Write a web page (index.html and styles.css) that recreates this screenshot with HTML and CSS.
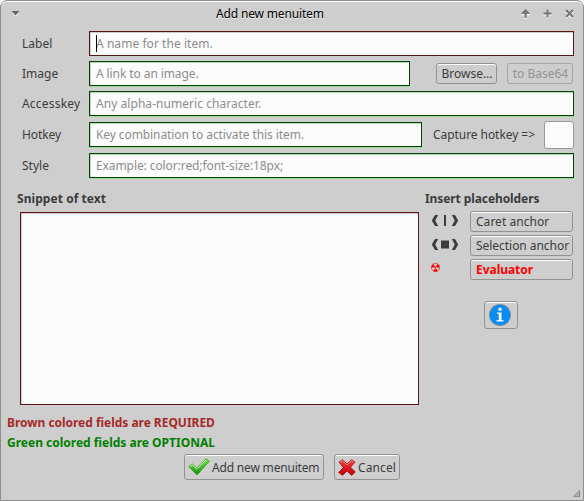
FILE: index.html
```html
<!DOCTYPE html>
<html lang="en">
<head>
<meta charset="utf-8">
<title>Add new menuitem</title>
<link rel="stylesheet" href="styles.css">
</head>
<body>
<main class="window">
  <header class="titlebar">
    <svg class="menu-arrow" width="9" height="6" viewBox="0 0 9 6"><path d="M1 1.5h7L4.500 5.800z" fill="#fff"/><path d="M.5 0h8L4.500 4.500z" fill="#666"/></svg>
    <h1 class="title">Add new menuitem</h1>
    <div class="controls">
      <svg width="9" height="10" viewBox="0 0 9 10"><path d="M4.500 10V3M1 6l3.500-3.500L8 6" stroke="#fff" stroke-width="2" fill="none"/><path d="M3.500 9V5H.5V4L4.500 0l4 4v1h-3v4z" fill="#777"/></svg>
      <svg width="9" height="10" viewBox="0 0 9 10"><path d="M.5 5.500h8M4.500 1.500v8" stroke="#fff" stroke-width="2"/><path d="M.5 4.500h8M4.500.5v8" stroke="#777" stroke-width="2"/></svg>
      <svg width="9" height="10" viewBox="0 0 9 10"><path d="M1 2l7 7M8 2L1 9" stroke="#fff" stroke-width="2"/><path d="M1 1l7 7M8 1L1 8" stroke="#777" stroke-width="2"/></svg>
    </div>
  </header>

  <section class="form">
    <div class="row"><span class="label">Label</span><div class="field required"><i class="caret"></i><span class="hint loose">A name for the item.</span></div></div>
    <div class="row"><span class="label">Image</span><div class="field image"><span class="hint tight">A link to an image.</span></div><button class="btn browse">Browse...</button><button class="btn base64" disabled>to Base64</button></div>
    <div class="row"><span class="label wide">Accesskey</span><div class="field"><span class="hint loose">Any alpha-numeric character.</span></div></div>
    <div class="row hotkey-row"><span class="label tight">Hotkey</span><div class="field hotkey"><span class="hint tight">Key combination to activate this item.</span></div><span class="capture">Capture hotkey =&gt;</span><div class="keybox"></div></div>
    <div class="row"><span class="label">Style</span><div class="field"><span class="hint tight">Example: color:red;font-size:18px;</span></div></div>
  </section>

  <section class="body">
    <div class="snippet">
      <h2>Snippet of text</h2>
      <div class="field required area"></div>
    </div>
    <div class="placeholders">
      <h2 class="tight">Insert placeholders</h2>
      <div class="ph-row"><svg width="28" height="12" viewBox="0 0 28 12"><path d="M4 0h3.200L4.200 5.500 7.200 11H4L.8 5.500zM24 0h-3.200l3 5.500-3 5.500H24l3.200-5.500zM13 0h2v11h-2z" fill="#3c3c3c"/></svg><button class="btn loose">Caret anchor</button></div>
      <div class="ph-row"><svg width="28" height="12" viewBox="0 0 28 12"><path d="M4 0h3.200L4.200 5.500 7.200 11H4L.8 5.500zM24 0h-3.200l3 5.500-3 5.500H24l3.200-5.500zM10 1.500h8v8h-8z" fill="#3c3c3c"/></svg><button class="btn">Selection anchor</button></div>
      <div class="ph-row evaluator"><svg class="rad" width="9" height="9" viewBox="0 0 18 18"><circle cx="9" cy="9" r="8.300" fill="none" stroke="#f00" stroke-width="1.300"/><path d="M9 9L1 9A8 8 0 0 1 5 2zM9 9L13 2A8 8 0 0 1 17 9zM9 9L13 16A8 8 0 0 1 5 16z" fill="#f00"/><circle cx="9" cy="9" r="2" fill="#f00" stroke="#cecece"/></svg><button class="btn">Evaluator</button></div>
      <button class="btn info"><svg width="24" height="24" viewBox="0 0 24 24"><circle cx="11" cy="12" r="11" fill="#7d8a96"/><circle cx="11" cy="12" r="10.200" fill="#0a8df2"/><path d="M8 9.500h4.500v7.800H14.500V18.500h-7v-1.200h2.200v-6.500H8z" fill="#fff"/><circle cx="11" cy="6.300" r="1.700" fill="#fff"/></svg></button>
    </div>
  </section>

  <p class="note brown">Brown colored fields are REQUIRED</p>
  <p class="note green">Green colored fields are OPTIONAL</p>

  <footer class="actions">
    <button class="btn add"><svg width="22" height="18" viewBox="0 0 22 18"><defs><linearGradient id="g" x1="0" y1="0" x2="0" y2="1"><stop offset="0" stop-color="#7be04e"/><stop offset="1" stop-color="#128f0c"/></linearGradient></defs><path d="M.7 8.500L4.500 6l4.200 4L18 .8l3.300 2.500L9 17z" fill="url(#g)" stroke="#249a18" stroke-width=".7"/><path d="M2 8.500l2.500-1.500L8.700 11 18 2" fill="none" stroke="#d4f8bd" stroke-width="1"/></svg><span>Add new menuitem</span></button>
    <button class="btn cancel"><svg width="18" height="17" viewBox="0 0 18 17"><defs><linearGradient id="r" x1="0" y1="0" x2="0" y2="1"><stop offset="0" stop-color="#ee4848"/><stop offset=".5" stop-color="#e31b20"/><stop offset="1" stop-color="#b40209"/></linearGradient></defs><path d="M1 3l3.500-2.300L9 5l4.500-4.300L17 3l-4.500 5.200L17.300 13l-3.800 3.300L9 12l-4.500 4.300L.7 13.500l4.600-5z" fill="url(#r)" stroke="#a5080c" stroke-width=".8"/><path d="M2 3.200L4.500 1.700 9 6l4.500-4.300L15.500 3" fill="none" stroke="#f7a0a0" stroke-width=".8"/></svg><span>Cancel</span></button>
  </footer>
  <svg class="grip" width="7" height="7" viewBox="0 0 7 7"><path d="M6.500.5v6h-6z" fill="#b0b0b0" stroke="#8a8a8a"/></svg>
</main>
</body>
</html>
```
FILE: styles.css
```css
* { box-sizing: border-box; }
body { margin: 0; background: #fff; }
.window {
  position: relative;
  width: 584px;
  height: 501px;
  background: #cecece;
  border: 1px solid #8e8e8e;
  border-radius: 7px 7px 0 0;
  box-shadow: inset 0 1px #fff;
  font: 12px/18px "Noto Sans", sans-serif;
  color: #3c3c3c;
  overflow: hidden;
}
h1, h2, p { margin: 0; white-space: nowrap; }
svg { display: block; flex: none; }
.titlebar {
  display: flex;
  align-items: center;
  height: 26px;
  padding: 0 9px 0 10px;
}
.title { flex: 1; margin-left: 196px; font-size: 12px; font-weight: 400; line-height: 18px; letter-spacing: -.16px; color: #000; text-shadow: 0 1px #eee; }
.controls { display: flex; gap: 13px; }
.form { display: flex; flex-direction: column; gap: 5px; padding: 4px 9px 0 21px; }
.row { display: flex; align-items: center; height: 25px; }
.row .label { width: 67px; }
.wide { letter-spacing: .2px; }
.hotkey-row { margin: 1px 0; }
.field {
  position: relative;
  flex: 1;
  height: 25px;
  padding: 3px 6px;
  background: #fcfcfc;
  border: 1px solid #004500;
  box-shadow: inset 1px 1px #b9d9b9, 0 1px #9ad69a;
  white-space: nowrap;
}
.field.required { border-color: #5c1216; box-shadow: inset 1px 1px #d3cccc; }
.field.image { flex: none; width: 321px; }
.field.hotkey { flex: none; width: 333px; }
.hint { color: #8d8d8d; }
.tight { letter-spacing: -.09px; }
.loose { letter-spacing: .05px; }
.caret { position: absolute; left: 6px; top: 3px; width: 1px; height: 17px; background: #000; }
.capture { margin-left: 11px; white-space: nowrap; width: 111px; letter-spacing: -.06px; }
.keybox { flex: none; width: 30px; height: 28px; background: #fcfcfc; border: 1px solid #999; border-radius: 3px; margin-right: -1px; }
.btn {
  display: flex;
  align-items: center;
  justify-content: center;
  flex: none;
  margin: 0;
  padding: 0;
  height: 21px;
  font: inherit;
  color: #3c3c3c;
  white-space: nowrap;
  background: #cecece;
  border: 1px solid #929292;
  border-radius: 3px;
  box-shadow: inset 0 1px #fff;
}
.browse { width: 61px; margin-left: 26px; padding-left: 1px; }
.base64 { width: 66px; margin-left: 10px; padding-left: 1px; color: #929292; border-color: #a5a5a5; box-shadow: none; }
h2 { font-size: 12px; line-height: 18px; font-weight: 700; }
.snippet h2 { letter-spacing: .06px; }
.body { display: flex; height: 215px; padding-top: 12px; }
.snippet { width: 424px; padding-left: 16px; }
.snippet .area { width: 399px; height: 193px; margin: 4px 0 0 3px; }
.placeholders h2 { margin-bottom: 3px; }
.ph-row { display: flex; height: 24px; width: 148px; padding-left: 6px; justify-content: space-between; }
.ph-row svg { margin-top: 4px; }
.ph-row .btn { width: 103px; justify-content: flex-start; padding-left: 5px; letter-spacing: -.04px; }
.ph-row .btn.loose { letter-spacing: .03px; }
.evaluator .btn { color: #f00; font-weight: 700; }
.info { width: 34px; height: 28px; margin: 18px 0 0 59px; }
.note { padding-left: 6px; height: 20px; line-height: 20px; font-weight: 700; }
.brown { color: #a52a2a; margin-top: 20px; letter-spacing: -.03px; }
.green { color: #008000; }
.actions { display: flex; gap: 10px; padding-left: 183px; margin-top: 1px; }
.actions .btn { height: 26px; justify-content: flex-start; padding-left: 3px; gap: 2px; }
.actions span { position: relative; top: 1px; }
.add { width: 140px; letter-spacing: -.18px; }
.cancel { width: 66px; letter-spacing: .1px; }
.grip { position: absolute; right: 3px; bottom: 3px; }
```
